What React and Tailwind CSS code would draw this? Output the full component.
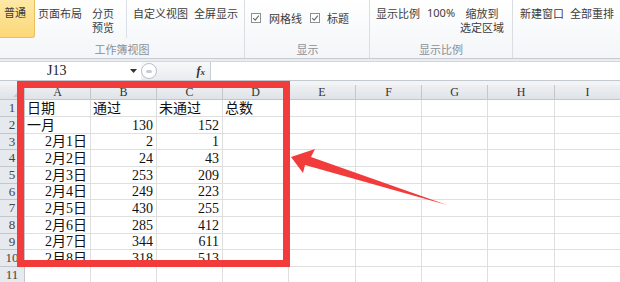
import React from "react";

const cellFont = { fontFamily: '"Liberation Serif", "Noto Sans CJK SC", serif' };

const cols = [
  { k: "A", w: "w-[66px]" },
  { k: "B", w: "w-[66px]" },
  { k: "C", w: "w-[66px]" },
  { k: "D", w: "w-[66px]" },
  { k: "E", w: "w-[67px]" },
  { k: "F", w: "w-[66px]" },
  { k: "G", w: "w-[66px]" },
  { k: "H", w: "w-[67px]" },
  { k: "I", w: "w-[66px]" },
];

const rowH = ["h-[17px]", "h-[17px]", "h-[16px]", "h-[17px]", "h-[17px]", "h-[16px]", "h-[17px]", "h-[17px]", "h-[16px]", "h-[17px]", "h-[17px]"];

const data = [
  [["日期", "l"], ["通过", "l"], ["未通过", "l"], ["总数", "l"]],
  [["一月", "l"], ["130", "r"], ["152", "r"]],
  [["2月1日", "r"], ["2", "r"], ["1", "r"]],
  [["2月2日", "r"], ["24", "r"], ["43", "r"]],
  [["2月3日", "r"], ["253", "r"], ["209", "r"]],
  [["2月4日", "r"], ["249", "r"], ["223", "r"]],
  [["2月5日", "r"], ["430", "r"], ["255", "r"]],
  [["2月6日", "r"], ["285", "r"], ["412", "r"]],
  [["2月7日", "r"], ["344", "r"], ["611", "r"]],
  [["2月8日", "r"], ["318", "r"], ["513", "r"]],
  [],
];

function Check() {
  return (
    <span className="w-[10px] h-[10px] shrink-0 border border-[#8f8f8f] bg-white flex items-center justify-center">
      <svg width="8" height="8" viewBox="0 0 8 8">
        <path d="M1.2 4.2 L3.2 6.2 L6.8 1.6" fill="none" stroke="#6a6a6a" strokeWidth="1.1" />
      </svg>
    </span>
  );
}

export default function App() {
  return (
    <div
      className="relative w-[620px] h-[282px] overflow-hidden bg-white text-[#3c3c3c]"
      style={{ fontFamily: '"Noto Sans CJK SC", "Noto Sans", sans-serif' }}
    >
      {/* Ribbon */}
      <div className="flex h-[58px] bg-gradient-to-b from-[#ffffff] to-[#f3f5f8] text-[11px] leading-[14px] whitespace-nowrap">
        {/* group 1 */}
        <div className="w-[245px] shrink-0 flex flex-col border-r border-[#dadde2]">
          <div className="h-[42px] flex">
            <div className="w-[35px] shrink-0 h-[38px] rounded-br-[3px] border-r border-b border-[#e8c060] bg-gradient-to-b from-[#fde9a6] to-[#fcd877] pt-[5px] pl-[4px]">
              普通
            </div>
            <div className="pl-[3px] pt-[6px] w-[57px] shrink-0">页面布局</div>
            <div className="pt-[6px] w-[34px] shrink-0 flex flex-col">
              <span>分页</span>
              <span>预览</span>
            </div>
            <div className="w-px shrink-0 h-[38px] bg-[#dcdfe4]" />
            <div className="pl-[6px] pt-[6px] shrink-0">自定义视图</div>
            <div className="pl-[6px] pt-[6px] shrink-0">全屏显示</div>
          </div>
          <div className="h-[16px] text-center text-[#8a8f96]">工作簿视图</div>
        </div>
        {/* group 2 */}
        <div className="w-[125px] shrink-0 flex flex-col border-r border-[#dadde2]">
          <div className="h-[42px] flex items-start pt-[13px] pl-[6px]">
            <Check />
            <span className="ml-[8px] -mt-[2px]">网格线</span>
            <span className="ml-[8px]"><Check /></span>
            <span className="ml-[7px] -mt-[2px]">标题</span>
          </div>
          <div className="h-[16px] text-center text-[#8a8f96] pl-[1px]">显示</div>
        </div>
        {/* group 3 */}
        <div className="w-[143px] shrink-0 flex flex-col border-r border-[#dadde2]">
          <div className="h-[42px] flex pt-[6px] pl-[6px]">
            <span className="shrink-0">显示比例</span>
            <span className="ml-[7px] shrink-0" style={{ fontFamily: '"Noto Sans", sans-serif' }}>100%</span>
            <div className="ml-[5px] shrink-0 flex flex-col items-center">
              <span>缩放到</span>
              <span>选定区域</span>
            </div>
          </div>
          <div className="h-[16px] text-center text-[#8a8f96]">显示比例</div>
        </div>
        {/* group 4 */}
        <div className="flex-1 flex flex-col">
          <div className="h-[42px] flex pt-[6px] pl-[7px]">
            <span className="shrink-0">新建窗口</span>
            <span className="ml-[6px] shrink-0">全部重排</span>
            <span className="ml-[6px] shrink-0">冻结窗格</span>
          </div>
        </div>
      </div>
      <div className="h-[4px] border-t border-[#c6cbd2] bg-[#e9ecf0] border-b border-b-[#d3d7dd]" />

      {/* Formula bar */}
      <div className="flex h-[18px] bg-white">
        <div className="w-[141px] relative flex items-center" style={cellFont}>
          <span className="ml-[47px] text-[14px] leading-[16px] text-[#222]">J13</span>
          <svg className="absolute left-[130px] top-[7px]" width="7" height="4" viewBox="0 0 7 4">
            <path d="M0 0 H7 L3.5 4 Z" fill="#333" />
          </svg>
        </div>
        <div className="w-[70px] flex items-center bg-gradient-to-b from-[#f7f8fa] to-[#e9ecf0] border-r border-[#c9ced5]">
          <div className="w-[16px] h-[16px] rounded-full border border-[#b9bfc7] bg-white flex items-center justify-center">
            <div className="w-[6px] h-[3px] rounded-full bg-[#c8ccd2]" />
          </div>
          <span
            className="ml-auto mr-[5px] text-[12px] italic font-bold text-[#333]"
            style={{ fontFamily: '"Liberation Serif", serif' }}
          >
            f<span className="text-[9px]">x</span>
          </span>
        </div>
        <div className="flex-1" />
      </div>
      <div className="h-[5px] border-t border-[#c4c9d0] bg-[#f2f4f6]" />

      {/* Sheet */}
      <div style={cellFont} className="text-[#111]">
        <div className="flex h-[15px] bg-gradient-to-b from-[#eef0f3] to-[#dfe3e8] border-b border-[#c2c7ce]">
          <div className="w-[25px] shrink-0 border-r border-[#c2c7ce] relative">
            <svg className="absolute right-[3px] bottom-[2px]" width="8" height="8" viewBox="0 0 8 8">
              <path d="M8 0 V8 H0 Z" fill="#c5cad1" />
            </svg>
          </div>
          {cols.map((c) => (
            <div
              key={c.k}
              className={`${c.w} shrink-0 border-r border-[#c2c7ce] text-center text-[12px] leading-[14px] text-[#333]`}
            >
              {c.k}
            </div>
          ))}
        </div>
        {rowH.map((h, ri) => (
          <div key={ri} className={`flex ${h}`}>
            <div className="w-[25px] shrink-0 bg-[#e6e9ed] border-r border-b border-[#c2c7ce] text-center text-[13px] leading-[16px] text-[#444]">
              {ri + 1}
            </div>
            {cols.map((c, ci) => {
              const cell = data[ri][ci];
              return (
                <div
                  key={c.k}
                  className={`${c.w} shrink-0 border-r border-b border-[#dfdfdf] flex items-end text-[14px] leading-[15px] whitespace-nowrap overflow-hidden ${
                    cell && cell[1] === "r" ? "justify-end pr-[3px]" : "justify-start pl-[2px]"
                  }`}
                >
                  {cell ? cell[0] : ""}
                </div>
              );
            })}
          </div>
        ))}
      </div>

      {/* Annotation: red box */}
      <div className="absolute left-[17px] top-[81px] w-[273px] h-[186px] border-[7px] border-[#f23b3b] pointer-events-none" />

      {/* Annotation: arrow */}
      <svg className="absolute left-0 top-0 pointer-events-none" width="620" height="282" viewBox="0 0 620 282">
        <polygon points="291,157 315,149 311,157 447,205 305,165 303,173" fill="#f23b3b" />
      </svg>
    </div>
  );
}
